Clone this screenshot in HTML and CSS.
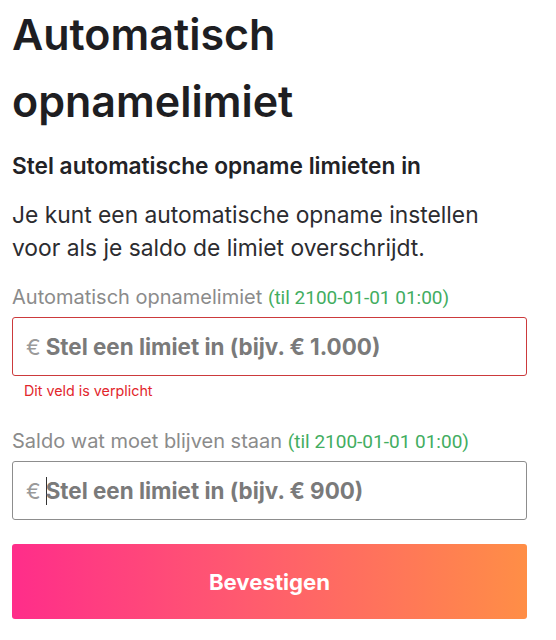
FILE: index.html
```html
<!DOCTYPE html>
<html lang="nl">
<head>
<meta charset="utf-8">
<title>Automatisch opnamelimiet</title>
<link rel="stylesheet" href="styles.css">
</head>
<body>
<main class="page">
  <h1 class="title">Automatisch opnamelimiet</h1>
  <h2 class="subtitle">Stel automatische opname limieten in</h2>
  <p class="intro">Je kunt een automatische opname instellen voor als je saldo de limiet overschrijdt.</p>

  <form class="form">
    <div class="field">
      <label class="label" for="limit">Automatisch opnamelimiet <span class="until">(til 2100-01-01 01:00)</span></label>
      <div class="input-box input-box--error">
        <span class="currency">€</span>
        <input class="input" id="limit" type="text" placeholder="Stel een limiet in (bijv. € 1.000)">
      </div>
      <div class="error">Dit veld is verplicht</div>
    </div>

    <div class="field field--second">
      <label class="label" for="remain">Saldo wat moet blijven staan <span class="until">(til 2100-01-01 01:00)</span></label>
      <div class="input-box">
        <span class="currency">€</span>
        <span class="caret"></span>
        <input class="input" id="remain" type="text" placeholder="Stel een limiet in (bijv. € 900)">
      </div>
    </div>

    <button class="submit" type="button">Bevestigen</button>
  </form>
</main>
</body>
</html>
```
FILE: styles.css
```css
* { box-sizing: border-box; }

html, body {
  margin: 0;
  padding: 0;
  background: #ffffff;
}

body {
  font-family: Inter, "Noto Sans", "Liberation Sans", sans-serif;
  color: #1f1f23;
}

.page {
  width: 527px;
  padding: 1px 0 0 12px;
}

.title {
  margin: 0;
  font-size: 43px;
  line-height: 67px;
  font-weight: 600;
  color: #1e1e22;
  width: 420px;
}

.subtitle {
  margin: 19px 0 0;
  font-size: 22.7px;
  line-height: 24px;
  font-weight: 600;
  color: #222226;
}

.intro {
  margin: 20px 0 0;
  font-size: 22.8px;
  line-height: 33px;
  font-weight: 400;
  color: #2c2c30;
  width: 510px;
}

.form {
  margin: 23px 0 0;
  display: flex;
  flex-direction: column;
}

.field {
  display: flex;
  flex-direction: column;
}

.field--second {
  margin-top: 32px;
}

.label {
  font-size: 20px;
  line-height: 20px;
  color: #8b8b8b;
  font-weight: 400;
}

.until {
  color: #42ad5f;
  font-family: Roboto, "Liberation Sans", sans-serif;
  font-size: 19px;
}

.input-box {
  margin-top: 9px;
  height: 59px;
  border: 1px solid #8d8d8d;
  border-radius: 3px;
  display: flex;
  align-items: center;
  padding-left: 13px;
  background: #fff;
}

.input-box--error {
  border-color: #cc3a3c;
}

.currency {
  font-size: 22px;
  color: #9a9a9a;
  margin-right: 5px;
}

.caret {
  width: 1px;
  height: 28px;
  background: #333;
  margin-right: -1px;
}

.input {
  flex: 1;
  border: 0;
  outline: 0;
  background: transparent;
  padding: 0;
  font-family: inherit;
  font-size: 22.4px;
  font-weight: 700;
  color: #444;
}

.input::placeholder {
  color: #7a7a7a;
  font-weight: 700;
  opacity: 1;
}

.error {
  margin-top: 7px;
  padding-left: 12px;
  font-size: 14.3px;
  line-height: 16px;
  color: #e2262c;
}

.submit {
  margin-top: 24px;
  height: 75px;
  border: 0;
  border-radius: 3px;
  background: linear-gradient(90deg, #ff2d8a 0%, #ff5a6f 45%, #ff8e46 100%);
  color: #ffffff;
  font-family: inherit;
  font-size: 22.2px;
  font-weight: 700;
  cursor: pointer;
}
```
